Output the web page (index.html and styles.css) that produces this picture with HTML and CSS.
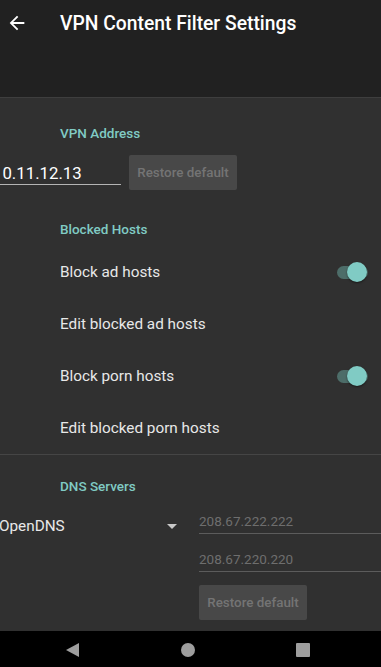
FILE: index.html
```html
<!DOCTYPE html>
<html>
<head>
<link rel="stylesheet" href="styles.css">
</head>
<body>
<div class="screen">
 <div class="appbar">
  <svg class="back" viewBox="0 0 24 24" width="22" height="22"><path d="M20 11H7.83l5.59-5.59L12 4l-8 8 8 8 1.41-1.41L7.83 13H20v-2z" fill="#fff"/></svg>
  <div class="title">VPN Content Filter Settings</div>
 </div>
 <div class="subbar"></div>

 <div class="content">
  <div class="section first">
   <div class="cat">VPN Address</div>
   <div class="addr-row">
    <div class="edit">10.11.12.13</div>
    <div class="btn">Restore default</div>
   </div>
  </div>

  <div class="section hosts">
   <div class="cat">Blocked Hosts</div>
   <div class="rows">
    <div class="row"><span>Block ad hosts</span><span class="switch"><span class="thumb"></span></span></div>
    <div class="row"><span>Edit blocked ad hosts</span></div>
    <div class="row"><span>Block porn hosts</span><span class="switch"><span class="thumb"></span></span></div>
    <div class="row"><span>Edit blocked porn hosts</span></div>
   </div>
  </div>

  <div class="divider"></div>

  <div class="section dns">
   <div class="cat">DNS Servers</div>
   <div class="dns-row">
    <div class="spinner"><span>OpenDNS</span><span class="caret"></span></div>
    <div class="dns-col">
     <div class="field">208.67.222.222</div>
     <div class="field">208.67.220.220</div>
     <div class="btn">Restore default</div>
    </div>
   </div>
  </div>
 </div>

 <div class="navbar">
  <div class="nav"><span class="nav-back"></span></div>
  <div class="nav"><span class="nav-home"></span></div>
  <div class="nav"><span class="nav-recent"></span></div>
 </div>
</div>
</body>
</html>
```

FILE: styles.css
```css
body{
   margin:0;
   background:#303030;
   font-family:Roboto, "Noto Sans", sans-serif;
}

.screen{
   width:381px;
   height:667px;
   display:flex;
   flex-direction:column;
   overflow:hidden;
}

.appbar{
   height:48px;
   background:#212121;
   display:flex;
   align-items:center;
}

.back{
   margin-left:6px;
   margin-top:-2px;
}

.title{
   margin-left:32px;
   margin-top:-2px;
   color:#fff;
   font-size:19.3px;
   font-weight:500;
}

.subbar{
   height:49px;
   background:#212121;
   border-bottom:1px solid #3e3e3e;
}

.content{
   flex:1;
   background:#303030;
   overflow:hidden;
}

.cat{
   margin-left:60px;
   font-size:13.5px;
   line-height:16px;
   font-weight:500;
   color:#80cbc4;
}

.section.first{
   padding-top:27px;
}

.addr-row{
   display:flex;
   margin-top:14px;
}

.edit{
   box-sizing:border-box;
   margin-left:-7px;
   margin-top:2px;
   width:128px;
   height:28px;
   padding:6px 0 1px;
   font-size:16.8px;
   line-height:20px;
   color:#fff;
   border-bottom:1px solid #b4b4b4;
}

.btn{
   width:108px;
   height:35px;
   margin-left:8px;
   background:#484848;
   border-radius:2px;
   color:#747474;
   font-size:13.4px;
   font-weight:500;
   display:flex;
   align-items:center;
   justify-content:center;
}

.section.hosts{
   margin-top:31px;
}

.rows{
   margin-top:9px;
}

.row{
   height:52px;
   padding:0 13px 0 60px;
   display:flex;
   align-items:center;
   justify-content:space-between;
   color:#e8e8e8;
   font-size:15.3px;
}

.switch{
   position:relative;
   width:31px;
   height:13px;
   border-radius:7px;
   background:#4d6d69;
}

.thumb{
   position:absolute;
   right:1px;
   top:-4px;
   width:20px;
   height:20px;
   border-radius:50%;
   background:#80cbc4;
   box-shadow:0 1px 2px rgba(0,0,0,.5);
}

.divider{
   height:1px;
   background:#454545;
}

.section.dns{
   padding-top:23px;
}

.dns-row{
   display:flex;
   margin-top:1px;
}

.spinner{
   width:186px;
   margin-left:-1px;
   margin-top:22px;
   height:18px;
   display:flex;
   align-items:center;
   justify-content:space-between;
   color:#e8e8e8;
   font-size:15.3px;
}

.caret{
   width:0;
   height:0;
   margin-right:8px;
   border-left:5px solid transparent;
   border-right:5px solid transparent;
   border-top:5px solid #c8c8c8;
}

.dns-col{
   margin-left:14px;
   flex:1;
   display:flex;
   flex-direction:column;
}

.field{
   height:20px;
   padding:18px 0 0;
   font-size:13.5px;
   line-height:16px;
   color:#6e6e6e;
   border-bottom:1px solid #5c5c5c;
}

.field + .field{
   padding-top:17px;
}

.dns-col .btn{
   margin-left:0;
   margin-top:13px;
}

.navbar{
   height:36px;
   background:#000;
   display:flex;
   padding:0 21px 0 15px;
}

.nav{
   flex:1;
   display:flex;
   align-items:center;
   justify-content:center;
}

.nav-back{
   width:0;
   height:0;
   margin-top:2px;
   border-top:7.5px solid transparent;
   border-bottom:7.5px solid transparent;
   border-right:13px solid #9e9e9e;
}

.nav-home{
   width:14px;
   height:14px;
   margin-top:2px;
   border-radius:50%;
   background:#9e9e9e;
}

.nav-recent{
   width:14px;
   height:14px;
   margin-top:1px;
   border-radius:1px;
   background:#9e9e9e;
}
```
